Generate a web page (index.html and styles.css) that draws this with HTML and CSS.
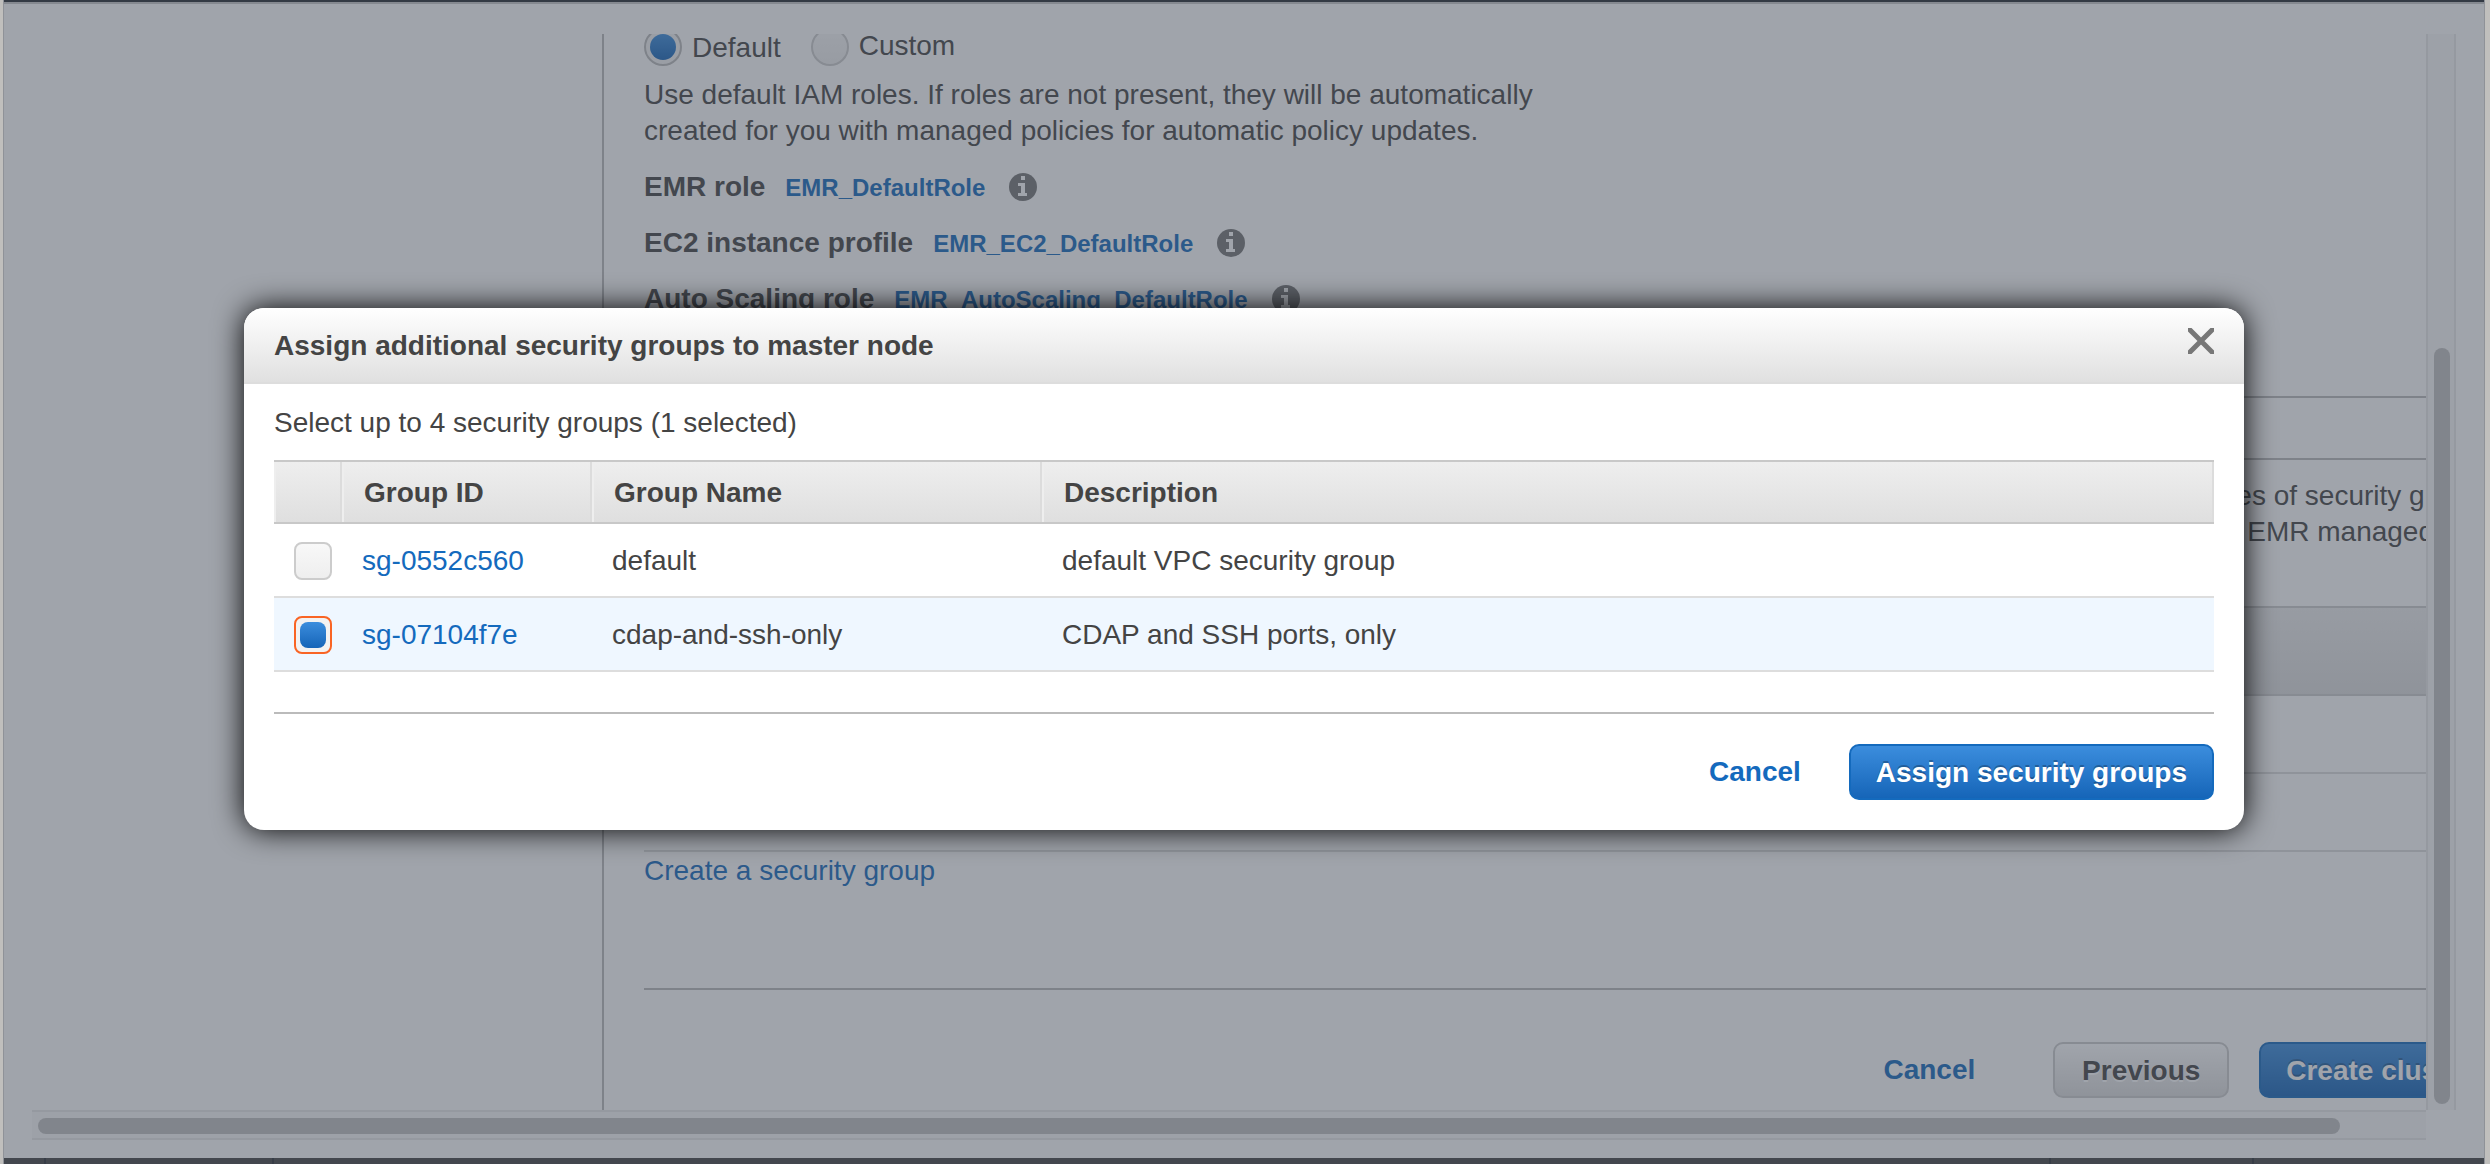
FILE: index.html
```html
<!DOCTYPE html>
<html lang="en">
<head>
<meta charset="utf-8">
<title>Create cluster - Security options</title>
<link rel="stylesheet" href="styles.css">
</head>
<body>
<div class="frame">
  <div class="page">
    <div class="viewport">
      <nav class="steps"></nav>
      <main class="content">
        <div class="radio-row">
          <label class="radio radio-checked"><input type="radio" name="roles" checked>Default</label>
          <label class="radio"><input type="radio" name="roles">Custom</label>
        </div>
        <p class="intro">Use default IAM roles. If roles are not present, they will be automatically<br>created for you with managed policies for automatic policy updates.</p>
        <div class="role"><b>EMR role</b><a href="#">EMR_DefaultRole</a>
          <svg class="info" viewBox="0 0 28 28"><circle cx="14" cy="14" r="14"/><path d="M12 3h4v4h-4zM9 10h7v10h2v3H9v-3h3v-7H9z"/></svg></div>
        <div class="role"><b>EC2 instance profile</b><a href="#">EMR_EC2_DefaultRole</a>
          <svg class="info" viewBox="0 0 28 28"><circle cx="14" cy="14" r="14"/><path d="M12 3h4v4h-4zM9 10h7v10h2v3H9v-3h3v-7H9z"/></svg></div>
        <div class="role"><b>Auto Scaling role</b><a href="#">EMR_AutoScaling_DefaultRole</a>
          <svg class="info" viewBox="0 0 28 28"><circle cx="14" cy="14" r="14"/><path d="M12 3h4v4h-4zM9 10h7v10h2v3H9v-3h3v-7H9z"/></svg></div>
        <div class="section-bar"></div>
        <p class="groups-note">types of security groups<br>are EMR managed</p>
        <div class="groups-head"></div>
        <div class="groups-row"></div>
        <div class="groups-row"></div>
        <a class="create-group" href="#">Create a security group</a>
        <div class="actions">
          <a class="cancel" href="#">Cancel</a>
          <button class="btn btn-plain" type="button">Previous</button>
          <button class="btn btn-primary" type="button">Create cluster</button>
        </div>
      </main>
    </div>
    <div class="track track-y"><div class="thumb"></div></div>
    <div class="track track-x"><div class="thumb"></div></div>
  </div>
  <footer class="console-footer"><span class="cell-a"></span><span class="cell-b"></span><span class="cell-c"></span><span class="cell-d"></span></footer>

  <div class="mask">
    <section class="dialog" role="dialog" aria-labelledby="dialog-title">
      <header class="dialog-head">
        <h2 id="dialog-title">Assign additional security groups to master node</h2>
        <button class="close" type="button" aria-label="Close"><svg viewBox="0 0 26 26"><path d="M-1 -1L27 27M27 -1L-1 27"/></svg></button>
      </header>
      <div class="dialog-body">
        <p class="hint">Select up to 4 security groups (1 selected)</p>
        <table class="groups">
          <thead>
            <tr><th class="col-check"></th><th class="col-id">Group ID</th><th class="col-name">Group Name</th><th>Description</th></tr>
          </thead>
          <tbody>
            <tr><td class="check-cell"><input type="checkbox" aria-label="sg-0552c560"></td><td><a href="#">sg-0552c560</a></td><td>default</td><td>default VPC security group</td></tr>
            <tr class="selected"><td class="check-cell"><input type="checkbox" aria-label="sg-07104f7e" checked></td><td><a href="#">sg-07104f7e</a></td><td>cdap-and-ssh-only</td><td>CDAP and SSH ports, only</td></tr>
          </tbody>
        </table>
        <div class="dialog-actions">
          <a class="cancel" href="#">Cancel</a>
          <button class="btn btn-primary" type="button">Assign security groups</button>
        </div>
      </div>
    </section>
  </div>
</div>
</body>
</html>
```
FILE: styles.css
```css
* { box-sizing: border-box; }

body {
  margin: 0;
  padding: 0 5px 0 3px;
  background: #c0bfbd;
  color: #444;
  font: 28px/36px "Liberation Sans", Arial, sans-serif;
}

a { color: #146abd; text-decoration: none; }
p, h2 { margin: 0; }
input { appearance: none; margin: 0; flex: none; }

.frame {
  position: relative;
  display: flex;
  flex-direction: column;
  height: 100vh;
  border-right: 1px solid #8f9298;
  border-left: 1px solid #8f9298;
  background: #fff;
  overflow: hidden;
}

.page {
  flex: 1;
  min-height: 0;
  display: grid;
  grid-template-columns: 1fr 30px;
  grid-template-rows: 1fr 30px;
  padding: 30px 28px 18px;
  border-top: 2px solid #c8c8c8;
  box-shadow: 0 -2px #242b31;
  margin-top: 2px;
}

.viewport { display: flex; overflow: hidden; min-width: 0; min-height: 0; }
.steps { flex: none; width: 572px; border-right: 2px solid #bbb; }

.content {
  flex: none;
  display: flex;
  flex-direction: column;
  width: calc(100% - 498px);
  padding-left: 40px;
  margin-top: -6px;
}

.radio-row { display: flex; gap: 30px; height: 40px; }
.radio { display: flex; align-items: flex-start; gap: 10px; line-height: 36px; }
.radio-checked { line-height: 40px; }
.radio input {
  width: 38px;
  height: 38px;
  border: 2px solid #ccc;
  border-radius: 50%;
  background: linear-gradient(#f8f8f8, #eee);
}
.radio input:checked {
  padding: 4px;
  border-color: #bbb;
  background: #f2f2f2;
}
input:checked::before {
  content: "";
  display: block;
  height: 100%;
  border-radius: inherit;
  background: linear-gradient(#3b8ddd, #1665b8);
}

.intro { margin-top: 9px; margin-bottom: 20px; }

.role { display: flex; align-items: center; height: 36px; margin-bottom: 20px; }
.role a { margin: 0 24px 0 20px; font-size: 24px; font-weight: bold; padding-top: 2px; }
.info { width: 28px; height: 28px; }
.info circle { fill: #777; }
.info path { fill: #fff; }

.section-bar { height: 64px; margin-top: 59px; border: solid #bbb; border-width: 2px 0; }
.groups-note { margin: 18px 0 0 1555px; white-space: nowrap; }
.groups-head {
  height: 90px;
  margin-top: 56px;
  border: solid #ccc;
  border-width: 2px 0;
  background: linear-gradient(#eee, #ddd);
}
.groups-row { height: 78px; border-bottom: 2px solid #ddd; }
.create-group { align-self: flex-start; margin-top: 1px; }

.actions {
  display: flex;
  align-items: center;
  justify-content: flex-end;
  margin-top: 99px;
  padding-top: 52px;
  border-top: 2px solid #bbb;
}
.actions .cancel { margin-right: 78px; }
.actions .btn-plain { margin-right: 30px; }

.cancel { font-weight: bold; }

.btn {
  min-width: 176px;
  height: 56px;
  padding: 2px 25px 0;
  border: 2px solid #ccc;
  border-radius: 10px;
  color: #444;
  font: bold 28px/36px "Liberation Sans", Arial, sans-serif;
}
.btn-plain { background: linear-gradient(#fff, #ddd); text-shadow: 0 2px #fff; }
.btn-primary {
  border-color: #146abd;
  background: linear-gradient(#3b8ddd, #1665b8);
  color: #fff;
  text-shadow: 0 -2px rgba(0, 0, 0, .25);
}

.track { background: #f8f8f8; }
.track-y { border: solid #e8e8e8; border-width: 0 2px; padding: 314px 4px 6px 6px; }
.track-x { border: solid #e8e8e8; border-width: 2px 0; padding: 6px 86px 4px 6px; }
.track .thumb { height: 100%; border-radius: 8px; background: #c1c1c1; }

.console-footer { display: flex; flex: none; height: 6px; background: #444; }
.console-footer span { border-right: 2px solid #2c3036; }
.cell-a { width: 42px; }
.cell-b { width: 228px; }
.cell-c { flex: 1; }
.cell-d { width: 203px; }
.console-footer::after { content: ""; width: 230px; }

.mask {
  position: absolute;
  inset: 0;
  display: flex;
  align-items: flex-start;
  justify-content: center;
  padding-top: 308px;
  background: rgba(66, 74, 87, .5);
}

.dialog {
  width: min(2000px, 92%);
  border-radius: 20px;
  background: #fff;
  box-shadow: 0 0 30px #000;
}
.dialog-head {
  display: flex;
  align-items: center;
  justify-content: space-between;
  height: 76px;
  padding: 2px 30px 0;
  border-bottom: 2px solid #ddd;
  border-radius: 20px 20px 0 0;
  background: linear-gradient(#fff, #e0e0e0);
}
.dialog-head h2 { font-size: 28px; line-height: 36px; }
.close { align-self: flex-start; margin-top: 18px; padding: 0; border: 0; background: none; }
.close svg { display: block; width: 26px; height: 26px; }
.close path { stroke: #777; stroke-width: 5px; }

.dialog-body { padding: 21px 30px 30px; }
.hint { margin-bottom: 19px; }

.groups { width: 100%; table-layout: fixed; border-spacing: 0; }
.groups th, .groups td { padding: 2px 20px 0; text-align: left; }
.groups th {
  height: 64px;
  border: solid #c8c8c8;
  border-width: 2px 0;
  background: linear-gradient(#eee, #dfdfdf);
  padding: 2px 22px 0;
  box-shadow: inset -2px 0 #dcdcdc, inset 2px 0 #eee;
}
.groups .col-check { width: 68px; }
.groups .col-id { width: 250px; }
.groups .col-name { width: 450px; }
.groups td { height: 74px; border-bottom: 2px solid #ddd; }
.selected td { background: #eff7ff; }

.check-cell input {
  display: block;
  width: 38px;
  height: 38px;
  border: 2px solid #ccc;
  border-radius: 8px;
  background: linear-gradient(#f8f8f8, #eee);
}
.check-cell input:checked {
  padding: 4px;
  border-color: #f96424;
  background: #f2f2f2;
}

.dialog-actions {
  display: flex;
  align-items: center;
  justify-content: flex-end;
  gap: 48px;
  margin-top: 40px;
  padding-top: 30px;
  border-top: 2px solid #bbb;
}
```
